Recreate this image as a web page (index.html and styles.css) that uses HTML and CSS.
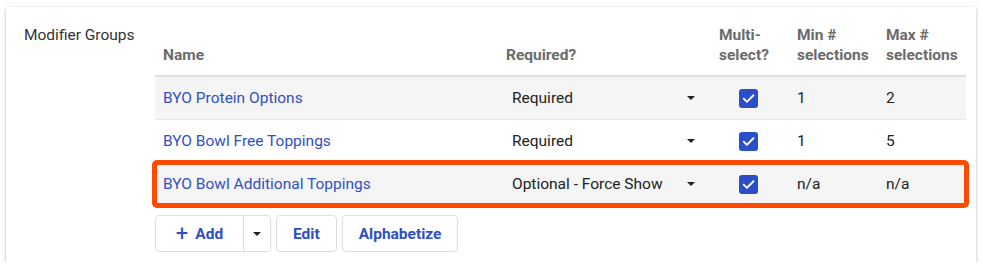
FILE: index.html
```html
<!DOCTYPE html>
<html lang="en">
<head>
    <meta charset="UTF-8">
    <title>Modifier Groups</title>
    <link rel="stylesheet" href="styles.css">
</head>
<body>
    <div class="card">
        <div class="field-label">Modifier Groups</div>
        <div class="field-body">
            <div class="grid head">
                <div class="cell">Name</div>
                <div class="cell">Required?</div>
                <div class="cell">Multi-<br>select?</div>
                <div class="cell">Min #<br>selections</div>
                <div class="cell">Max #<br>selections</div>
            </div>

            <div class="grid row odd">
                <div class="cell"><a href="#">BYO Protein Options</a></div>
                <div class="cell"><div class="select">Required <span class="caret"></span></div></div>
                <div class="cell center"><span class="checkbox"><svg viewBox="0 0 20 20" width="19" height="19"><path d="M5 10.2l3.3 3.3L15.2 6.6" fill="none" stroke="#fff" stroke-width="2" stroke-linecap="round" stroke-linejoin="round"/></svg></span></div>
                <div class="cell">1</div>
                <div class="cell">2</div>
            </div>

            <div class="grid row">
                <div class="cell"><a href="#">BYO Bowl Free Toppings</a></div>
                <div class="cell"><div class="select">Required <span class="caret"></span></div></div>
                <div class="cell center"><span class="checkbox"><svg viewBox="0 0 20 20" width="19" height="19"><path d="M5 10.2l3.3 3.3L15.2 6.6" fill="none" stroke="#fff" stroke-width="2" stroke-linecap="round" stroke-linejoin="round"/></svg></span></div>
                <div class="cell">1</div>
                <div class="cell">5</div>
            </div>

            <div class="grid row odd highlight">
                <div class="cell"><a href="#">BYO Bowl Additional Toppings</a></div>
                <div class="cell"><div class="select">Optional - Force Show <span class="caret"></span></div></div>
                <div class="cell center"><span class="checkbox"><svg viewBox="0 0 20 20" width="19" height="19"><path d="M5 10.2l3.3 3.3L15.2 6.6" fill="none" stroke="#fff" stroke-width="2" stroke-linecap="round" stroke-linejoin="round"/></svg></span></div>
                <div class="cell">n/a</div>
                <div class="cell">n/a</div>
            </div>

            <div class="actions">
                <div class="btn split">
                    <span class="split-main"><span class="plus">+</span> Add</span>
                    <span class="split-toggle"><span class="caret"></span></span>
                </div>
                <div class="btn">Edit</div>
                <div class="btn">Alphabetize</div>
            </div>
        </div>
    </div>
</body>
</html>
```

FILE: styles.css
```css
body {
    margin: 0;
    background: #fff;
    font-family: Roboto, "Noto Sans", sans-serif;
    font-size: 15.5px;
    color: #222;
}

.card {
    display: flex;
    width: 970px;
    height: 255px;
    box-sizing: border-box;
    margin: 7px 0 0 6px;
    padding: 18px 9px 10px 18px;
    background: #fff;
    box-shadow: 0 1px 3px rgba(0, 0, 0, 0.3);
}

.field-label {
    width: 131px;
    line-height: 20px;
    color: #333;
}

.field-body {
    width: 811px;
}

.grid {
    display: grid;
    grid-template-columns: 343px 213px 78px 89px 88px;
}

.cell {
    padding: 0 8px;
}

.head {
    align-items: end;
    line-height: 20px;
    padding-bottom: 10px;
    border-bottom: 2px solid #dedede;
    font-weight: 700;
    color: #6b6b6b;
}

.row {
    height: 42px;
    align-items: center;
    border-bottom: 1px solid #e8e8e8;
}

.row.odd {
    background: #f5f5f5;
}

.row a {
    color: #3150c2;
    text-decoration: none;
}

.highlight {
    position: relative;
    border-bottom-color: transparent;
}

.highlight::after {
    content: "";
    position: absolute;
    left: -3px;
    right: -3px;
    top: -3px;
    bottom: -3px;
    border: 5px solid #ff4a00;
    border-radius: 5px;
}

.select {
    display: flex;
    justify-content: space-between;
    align-items: center;
    padding: 0 8px 0 6px;
}

.caret {
    display: inline-block;
    width: 0;
    height: 0;
    border-left: 4px solid transparent;
    border-right: 4px solid transparent;
    border-top: 4px solid #222;
}

.center {
    display: flex;
    justify-content: center;
}

.checkbox {
    display: block;
    width: 19px;
    height: 19px;
    margin-left: -3px;
    border-radius: 3px;
    background: #2b4fc6;
}

.checkbox svg {
    display: block;
}

.actions {
    display: flex;
    gap: 5px;
    margin-top: 9px;
}

.btn {
    display: flex;
    align-items: center;
    height: 37px;
    box-sizing: border-box;
    padding: 0 16px;
    border: 1px solid #dedede;
    border-radius: 4px;
    background: #fff;
    color: #2d4fc4;
    font-weight: 700;
    font-size: 15.5px;
}

.btn.split {
    padding: 0;
}

.split-main {
    display: flex;
    align-items: center;
    width: 87px;
    height: 100%;
    justify-content: center;
    border-right: 1px solid #dedede;
}

.plus {
    font-size: 22px;
    font-weight: 400;
    margin-right: 7px;
    line-height: 1;
}

.split-toggle {
    display: flex;
    align-items: center;
    justify-content: center;
    width: 26px;
}
```
